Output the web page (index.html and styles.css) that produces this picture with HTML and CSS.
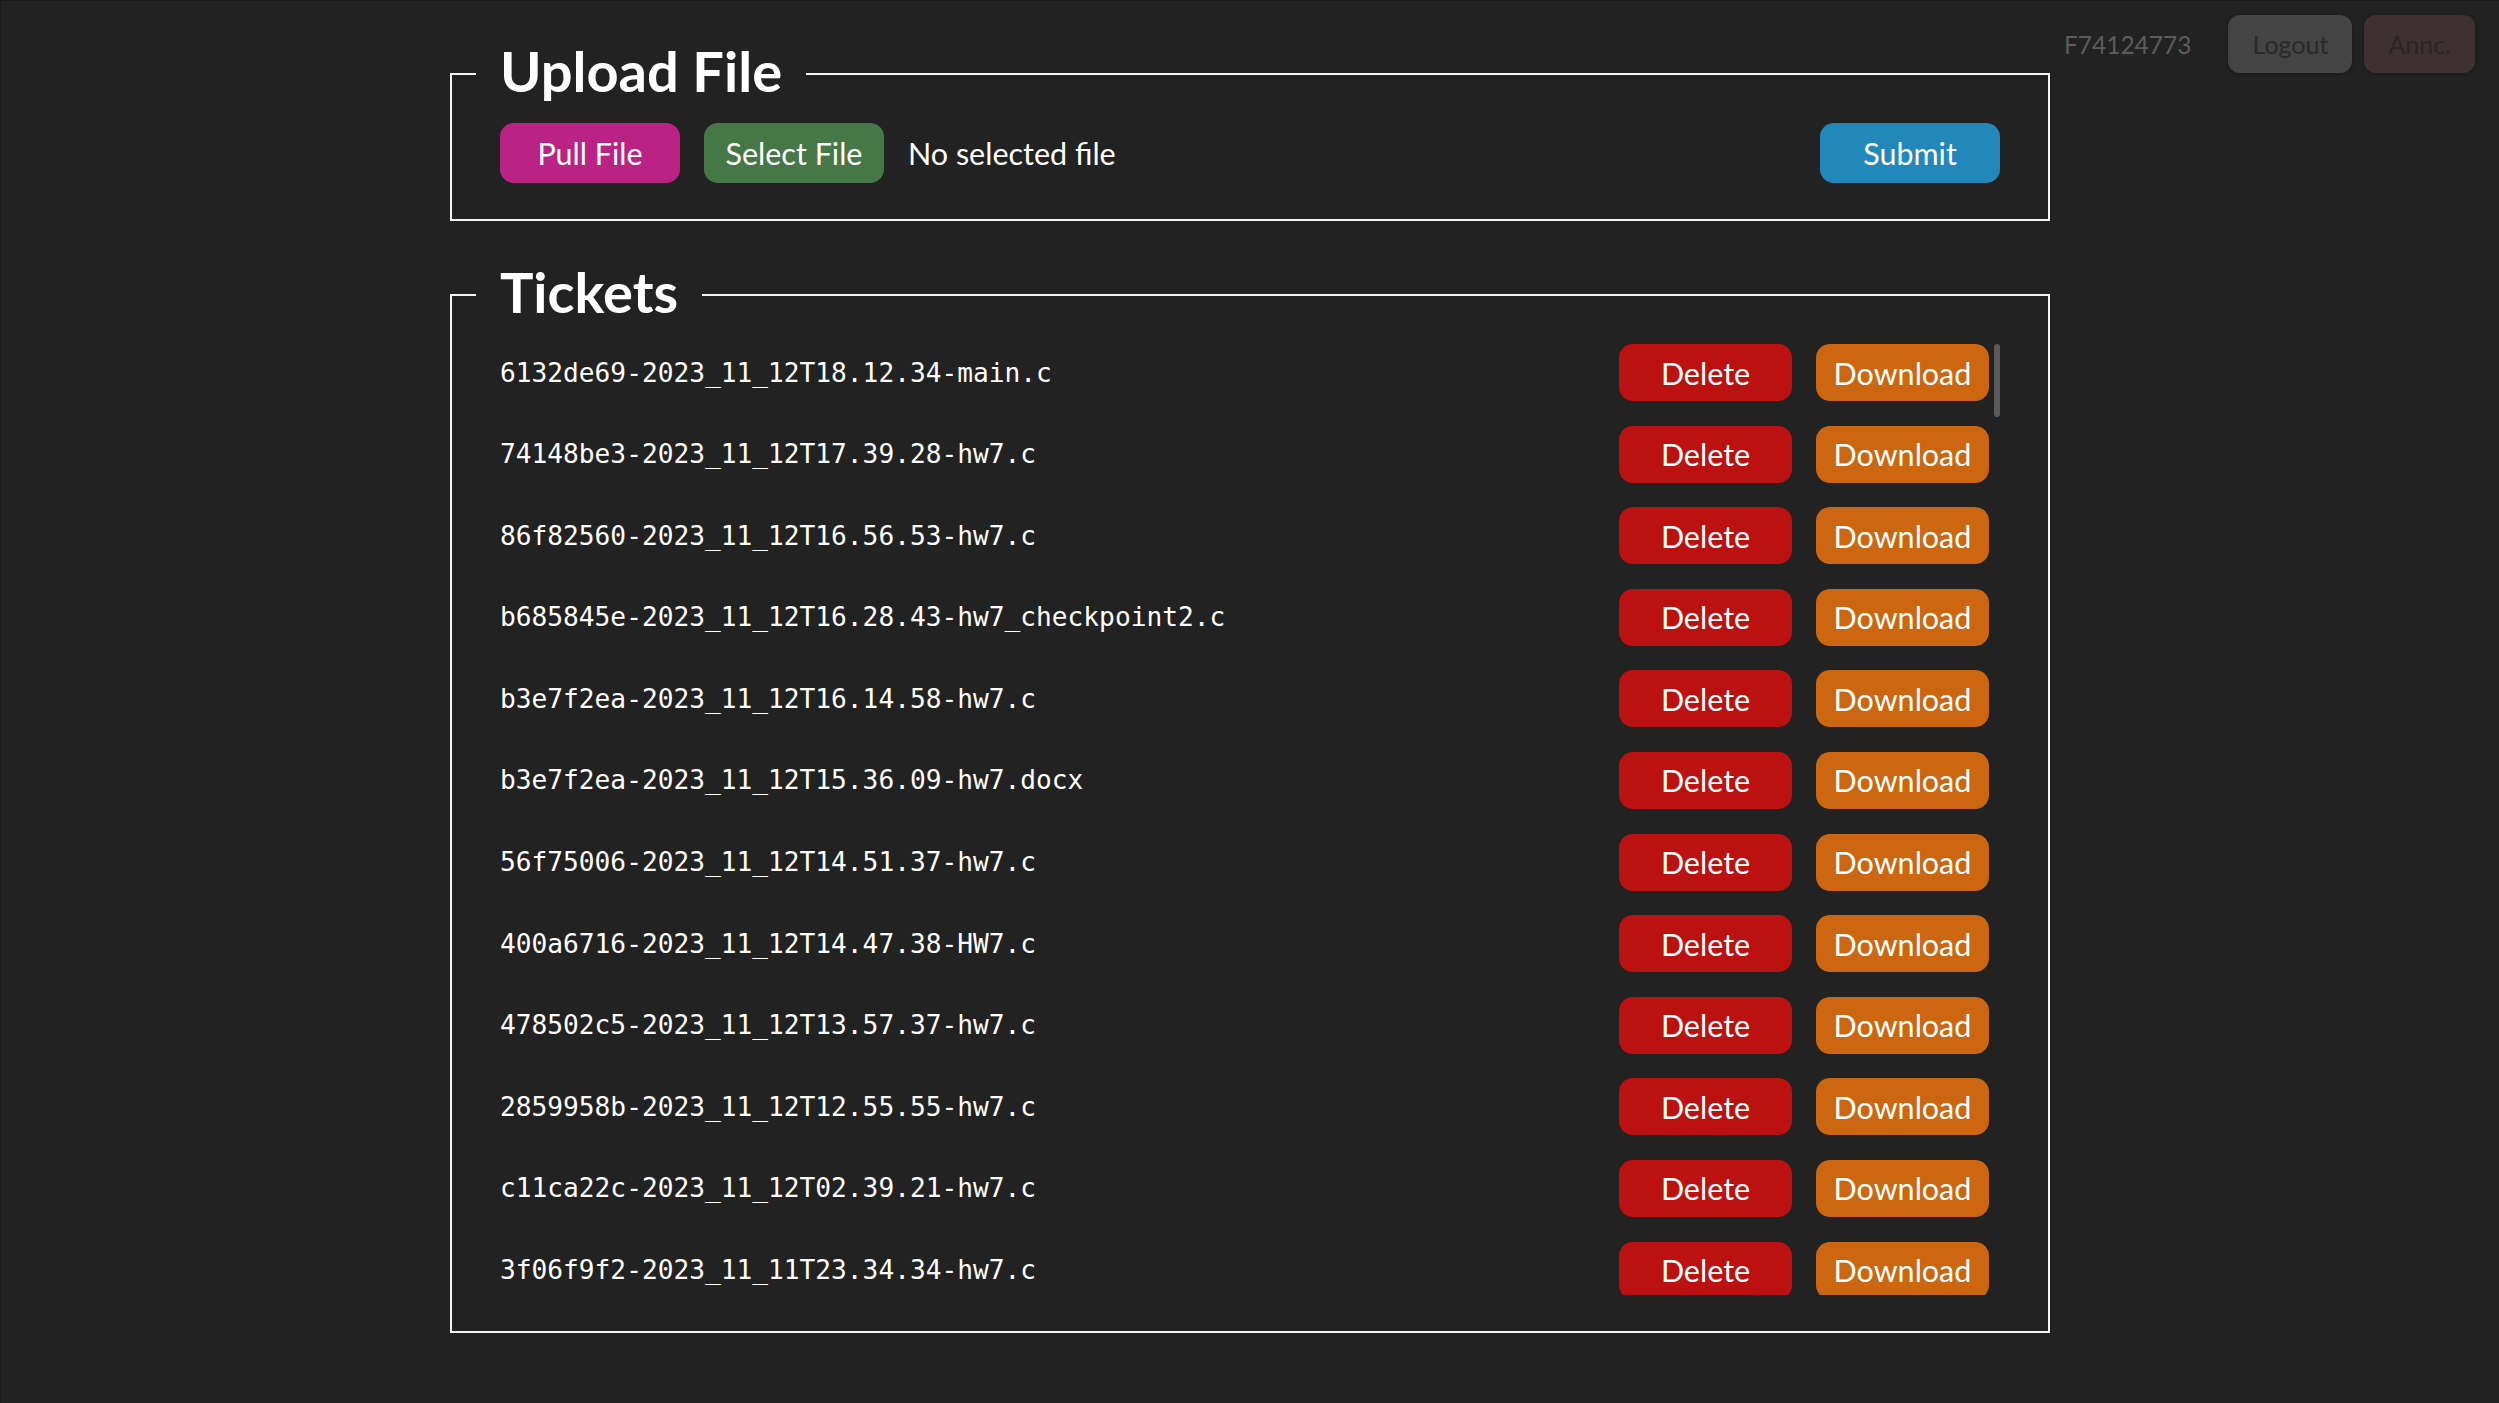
FILE: index.html
```html
<!DOCTYPE html>
<html lang="en">
<head>
<meta charset="utf-8">
<title>Upload File</title>
<link rel="stylesheet" href="styles.css">
</head>
<body>
<div class="page">
  <main class="main">
    <fieldset class="panel">
      <legend class="panel-title">Upload File</legend>
      <div class="upload-row">
        <button class="btn btn-pull">Pull File</button>
        <button class="btn btn-select">Select File</button>
        <span class="file-status">No selected file</span>
        <button class="btn btn-submit">Submit</button>
      </div>
    </fieldset>
    <fieldset class="panel panel-tickets">
      <legend class="panel-title">Tickets</legend>
      <div class="ticket-list">
        <div class="ticket"><span class="ticket-name">6132de69-2023_11_12T18.12.34-main.c</span><button class="btn btn-row btn-delete">Delete</button><button class="btn btn-row btn-download">Download</button></div>
        <div class="ticket"><span class="ticket-name">74148be3-2023_11_12T17.39.28-hw7.c</span><button class="btn btn-row btn-delete">Delete</button><button class="btn btn-row btn-download">Download</button></div>
        <div class="ticket"><span class="ticket-name">86f82560-2023_11_12T16.56.53-hw7.c</span><button class="btn btn-row btn-delete">Delete</button><button class="btn btn-row btn-download">Download</button></div>
        <div class="ticket"><span class="ticket-name">b685845e-2023_11_12T16.28.43-hw7_checkpoint2.c</span><button class="btn btn-row btn-delete">Delete</button><button class="btn btn-row btn-download">Download</button></div>
        <div class="ticket"><span class="ticket-name">b3e7f2ea-2023_11_12T16.14.58-hw7.c</span><button class="btn btn-row btn-delete">Delete</button><button class="btn btn-row btn-download">Download</button></div>
        <div class="ticket"><span class="ticket-name">b3e7f2ea-2023_11_12T15.36.09-hw7.docx</span><button class="btn btn-row btn-delete">Delete</button><button class="btn btn-row btn-download">Download</button></div>
        <div class="ticket"><span class="ticket-name">56f75006-2023_11_12T14.51.37-hw7.c</span><button class="btn btn-row btn-delete">Delete</button><button class="btn btn-row btn-download">Download</button></div>
        <div class="ticket"><span class="ticket-name">400a6716-2023_11_12T14.47.38-HW7.c</span><button class="btn btn-row btn-delete">Delete</button><button class="btn btn-row btn-download">Download</button></div>
        <div class="ticket"><span class="ticket-name">478502c5-2023_11_12T13.57.37-hw7.c</span><button class="btn btn-row btn-delete">Delete</button><button class="btn btn-row btn-download">Download</button></div>
        <div class="ticket"><span class="ticket-name">2859958b-2023_11_12T12.55.55-hw7.c</span><button class="btn btn-row btn-delete">Delete</button><button class="btn btn-row btn-download">Download</button></div>
        <div class="ticket"><span class="ticket-name">c11ca22c-2023_11_12T02.39.21-hw7.c</span><button class="btn btn-row btn-delete">Delete</button><button class="btn btn-row btn-download">Download</button></div>
        <div class="ticket"><span class="ticket-name">3f06f9f2-2023_11_11T23.34.34-hw7.c</span><button class="btn btn-row btn-delete">Delete</button><button class="btn btn-row btn-download">Download</button></div>
        <div class="scroll-thumb"></div>
      </div>
    </fieldset>
  </main>
  <header class="account">
    <span class="account-id">F74124773</span>
    <button class="btn-top btn-logout">Logout</button>
    <button class="btn-top btn-annc">Annc.</button>
  </header>
</div>
</body>
</html>
```

FILE: styles.css
```css
* {
  box-sizing: border-box;
}

html, body {
  margin: 0;
  padding: 0;
  background: #222222;
}

body {
  font-family: "Lato", "Liberation Sans", sans-serif;
  color: #ffffff;
  height: 100vh;
  overflow: hidden;
  border-top: 1px solid #191919;
  border-left: 1px solid #191919;
}

.page {
  display: grid;
  grid-template-columns: 1fr 1600px 1fr;
  align-items: start;
}

.main {
  grid-column: 2;
  grid-row: 1;
  padding-top: 41px;
  display: flex;
  flex-direction: column;
  gap: 42px;
}

.panel {
  border: 2px solid #f4f4f4;
  margin: 0;
  padding: 18px 48px 36px;
  min-width: 0;
}

.panel-title {
  font-family: "Lato", "Liberation Sans", sans-serif;
  font-weight: 700;
  font-size: 56px;
  line-height: 57px;
  padding: 0 24px 6px;
  margin-left: -24px;
  color: #ffffff;
}

.upload-row {
  display: flex;
  align-items: center;
  gap: 24px;
}

.btn {
  font-family: "Lato", "Liberation Sans", sans-serif;
  font-size: 30.5px;
  color: #ffffff;
  border: none;
  border-radius: 14px;
  padding: 0;
  width: 180px;
  height: 60px;
  text-align: center;
}

.btn-pull {
  background: #bb2286;
}

.btn-select {
  background: #467746;
}

.btn-submit {
  background: #2288bb;
  margin-left: auto;
}

.file-status {
  font-size: 30.5px;
  color: #ffffff;
}

.ticket-list {
  position: relative;
  height: 951px;
  overflow: hidden;
  padding-right: 11px;
}

.ticket {
  display: flex;
  align-items: center;
  gap: 24px;
  height: 57px;
  margin-bottom: 24.6px;
}

.ticket-name {
  flex: 1;
  font-family: "DejaVu Sans Mono", "Liberation Mono", monospace;
  font-size: 26.2px;
  color: #ffffff;
}

.btn-row {
  width: 173px;
  height: 57px;
  flex: none;
}

.btn-delete {
  background: #bb1111;
}

.btn-download {
  background: #cc6611;
}

.scroll-thumb {
  position: absolute;
  top: 0;
  right: 0;
  width: 6px;
  height: 73px;
  border-radius: 3px;
  background: #5a5a5a;
}

.account {
  grid-column: 3;
  grid-row: 1;
  display: flex;
  justify-content: flex-end;
  align-items: center;
  gap: 12px;
  padding: 14px 24px 0 0;
}

.account-id {
  font-size: 24.5px;
  color: #5c5c5c;
  margin-right: 25px;
}

.btn-top {
  font-family: "Lato", "Liberation Sans", sans-serif;
  font-size: 25px;
  height: 58px;
  padding: 0 24px;
  border: none;
  border-radius: 12px;
  color: #2a2a2a;
  box-shadow: 0 1px 4px rgba(0, 0, 0, 0.25);
}

.btn-logout {
  background: #444444;
}

.btn-annc {
  background: #3e3131;
  color: #2b2626;
}
```
